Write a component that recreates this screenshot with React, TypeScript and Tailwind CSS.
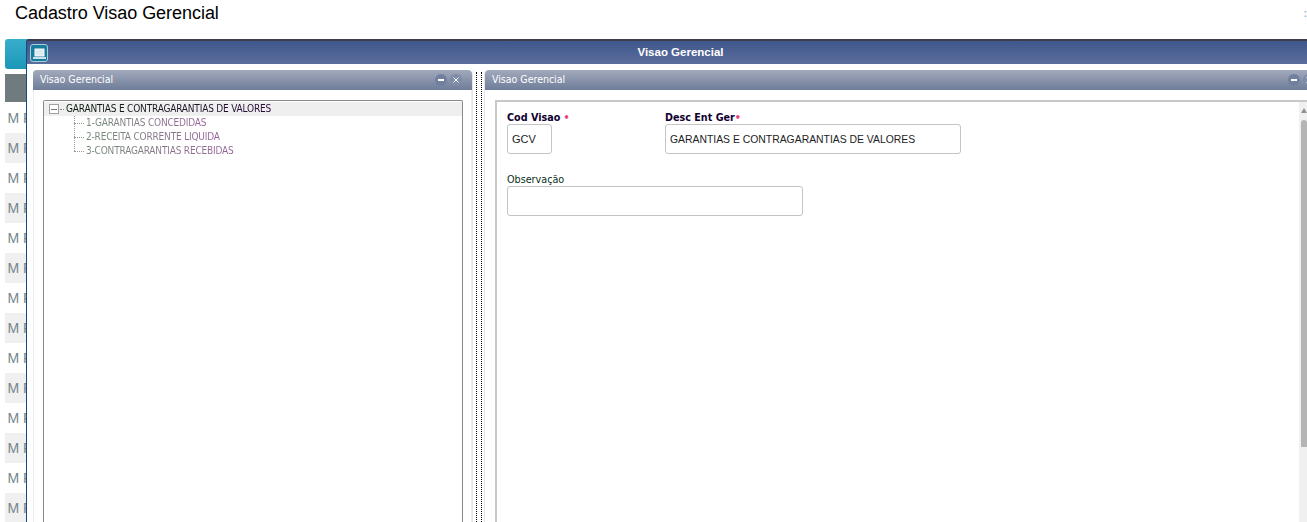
import React from "react";

const rows = Array.from({ length: 14 }, (_, i) => i);
const pixel = "font-['DejaVu_Sans'] [font-stretch:condensed]";

function PanelHeader({ title }: { title: string }) {
  return (
    <div className="flex h-[20px] items-center justify-between rounded-t-[4px] bg-gradient-to-b from-[#a2a9bc] to-[#6f7d99] pl-[7px] pr-[10px]">
      <span className={`${pixel} pb-px text-[10.5px] leading-none text-white`}>{title}</span>
      <div className="flex items-center gap-[3px]">
        <span className="flex h-[12px] w-[12px] items-center justify-center rounded-full bg-[#71809f]">
          <span className="h-[1.5px] w-[6px] bg-white" />
        </span>
        <span className="flex h-[12px] w-[12px] items-center justify-center rounded-full bg-[#7f8ca8]">
          <svg width="6" height="6" viewBox="0 0 6 6">
            <path d="M0.5 0.5L5.5 5.5M5.5 0.5L0.5 5.5" stroke="#ffffff" strokeWidth="1" />
          </svg>
        </span>
      </div>
    </div>
  );
}

function Label({ children, bold }: { children: React.ReactNode; bold?: boolean }) {
  return (
    <div
      className={`${pixel} text-[10.7px] leading-[12px] ${
        bold ? "font-bold text-[#100030]" : "text-[#0a3018]"
      }`}
    >
      {children}
    </div>
  );
}

export default function App() {
  return (
    <div className="relative h-[522px] w-[1307px] overflow-hidden bg-white font-['Liberation_Sans',sans-serif]">
      <div className="flex h-[39px] items-start justify-between pl-[15px] pt-[3px]">
        <h1 className="text-[18px] leading-[21px] tracking-[-0.04px] text-black">Cadastro Visao Gerencial</h1>
        <span className="pt-[6px] text-[10px] font-bold leading-none text-[#aaaaaa]">:</span>
      </div>

      <div className="pl-[5px]">
        <div className="h-[30px] w-[40px] rounded-[3px] bg-gradient-to-b from-[#38aecb] to-[#1b97b8]" />
        <div className="mt-[5px] h-[28px] bg-[#6f7b7f]" />
        <div className="mt-px">
          {rows.map((i) => (
            <div
              key={i}
              className={`flex h-[30px] items-center pl-[2.5px] text-[14px] text-[#74868a] ${
                i % 2 ? "bg-[#f0f0f0]" : "bg-white"
              }`}
            >
              M F
            </div>
          ))}
        </div>
      </div>

      <div className="absolute left-[26px] top-[39px] flex h-[483px] w-[1281px] flex-col rounded-tl-[3px] border-l border-t-2 border-l-[#0f4c81] border-t-[#3c3f4a] bg-white">
        <div className="relative flex h-[23px] shrink-0 items-center justify-center bg-gradient-to-b from-[#3f578c] to-[#5b6d9c] pl-[27px]">
          <div className="absolute left-[3px] top-[3px] flex h-[18px] w-[18px] items-center justify-center rounded-[3px] border border-[#a9cfdc] bg-[#167d9d]">
            <svg width="13" height="11" viewBox="0 0 13 11">
              <rect x="2" y="1" width="9" height="7" fill="#dfe9f1" stroke="#f8fbfd" />
              <rect x="0" y="9" width="13" height="2" fill="#cfe0e9" />
            </svg>
          </div>
          <span className="text-[11.5px] font-bold text-white">Visao Gerencial</span>
        </div>

        <div className="flex min-h-0 flex-1 pt-[6px]">
          <div className="ml-[6px] flex w-[439px] shrink-0 flex-col">
            <PanelHeader title="Visao Gerencial" />
            <div className="flex-1 border-x border-x-[#ececec] pl-[9px] pr-[8px] pt-[10px]">
              <div className="h-full rounded-t-[2px] border border-b-0 border-[#8a8a8a] pt-px">
                <div className="flex h-[14px] items-center bg-[#efefef] pl-[5px]">
                  <span className="flex h-[10px] w-[10px] items-center justify-center border border-[#a0a0a0] bg-white">
                    <span className="h-px w-[6px] bg-[#777777]" />
                  </span>
                  <span className="ml-[1px] mr-[2px] w-[4px] border-t border-dotted border-[#888888]" />
                  <span
                    className={`${pixel} bg-gradient-to-r from-[#0a1a0a] to-[#2a0a3a] bg-clip-text text-[10px] leading-[12px] tracking-[-0.18px] text-transparent`}
                  >
                    GARANTIAS E CONTRAGARANTIAS DE VALORES
                  </span>
                </div>
                <div className="relative ml-[30px]">
                  <span className="absolute left-0 top-0 h-[35px] border-l border-dotted border-[#999999]" />
                  {["1-GARANTIAS CONCEDIDAS", "2-RECEITA CORRENTE LIQUIDA", "3-CONTRAGARANTIAS RECEBIDAS"].map((t) => (
                    <div key={t} className="flex h-[14px] items-center">
                      <span className="mr-[2px] w-[10px] border-t border-dotted border-[#999999]" />
                      <span
                        className={`${pixel} bg-gradient-to-r from-[#6f8a72] to-[#96609a] bg-clip-text text-[10px] leading-[12px] tracking-[-0.18px] text-transparent`}
                      >
                        {t}
                      </span>
                    </div>
                  ))}
                </div>
              </div>
            </div>
          </div>

          <div className="flex h-full w-[13px] shrink-0 justify-center gap-[4px] rounded-t-[5px] border-x border-x-[#e4e4e4] pt-[2px]">
            <span className="w-0 border-l border-dotted border-black" />
            <span className="w-0 border-l border-dotted border-black" />
          </div>

          <div className="mr-[-18px] flex min-w-0 flex-1 flex-col">
            <PanelHeader title="Visao Gerencial" />
            <div className="flex-1 pl-[10px] pr-[18px] pt-[10px]">
              <div className="flex h-full border-l-2 border-t-2 border-[#c8c8c8]">
                <div className="flex-1 pl-[10px] pt-[10px]">
                  <div className="flex gap-[113px]">
                    <div className="w-[45px]">
                      <Label bold>
                        <span className="whitespace-nowrap">
                          Cod Visao <span className="text-[#f0407a]">•</span>
                        </span>
                      </Label>
                      <div className="flex h-[30px] w-[45px] items-center rounded-[3px] border border-[#c4c4c4] pl-[4px] text-[11px] text-[#222222]">
                        GCV
                      </div>
                    </div>
                    <div>
                      <Label bold>
                        Desc Ent Ger<span className="text-[#f0407a]">•</span>
                      </Label>
                      <div className="flex h-[30px] w-[296px] items-center rounded-[3px] border border-[#c4c4c4] pl-[4px] pt-px text-[10.4px] text-[#222222]">
                        GARANTIAS E CONTRAGARANTIAS DE VALORES
                      </div>
                    </div>
                  </div>
                  <div className="mt-[20px]">
                    <Label>Observação</Label>
                    <div className="h-[30px] w-[296px] rounded-[3px] border border-[#c4c4c4]" />
                  </div>
                </div>
                <div className="flex w-[8px] shrink-0 flex-col items-start bg-[#f0f0f0] pl-[2px] pt-[6px]">
                  <span className="h-0 w-0 border-x-[3px] border-b-[5px] border-x-transparent border-b-[#909090]" />
                  <span className="mt-[7px] h-[327px] w-[6px] rounded-t-[3px] bg-[#b5b5b5]" />
                </div>
              </div>
            </div>
          </div>
        </div>
      </div>
    </div>
  );
}
